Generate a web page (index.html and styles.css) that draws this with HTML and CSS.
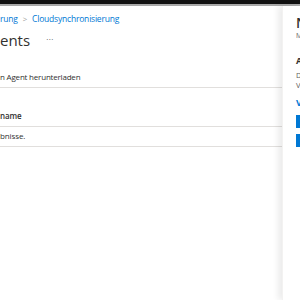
FILE: index.html
```html
<!DOCTYPE html>
<html lang="de">
<head>
  <meta charset="UTF-8">
  <title>Agents</title>
  <link rel="stylesheet" href="styles.css">
</head>
<body>
  <div class="topbar"></div>
  <div class="layout">
    <div class="main">
      <div class="breadcrumb">
        <a href="#">rung</a>
        <span class="sep">&gt;</span>
        <a href="#">Cloudsynchronisierung</a>
      </div>
      <div class="title-row">
        <h1>ents</h1>
        <span class="more">...</span>
      </div>
      <div class="toolbar">n Agent herunterladen</div>
      <div class="table">
        <div class="row head">name</div>
        <div class="row">bnisse.</div>
      </div>
    </div>
    <div class="panel">
      <div class="panel-title">N</div>
      <div class="panel-sub">M</div>
      <div class="panel-heading">A</div>
      <div class="panel-text">D</div>
      <div class="panel-text">V</div>
      <div class="panel-link">V</div>
      <div class="panel-btn"></div>
      <div class="panel-btn"></div>
    </div>
  </div>
</body>
</html>
```

FILE: styles.css
```css
html, body {
  margin: 0;
  padding: 0;
  height: 100%;
  background: #ffffff;
  font-family: "Open Sans", "Noto Sans", sans-serif;
  color: #323130;
  overflow: hidden;
}

.topbar {
  height: 4px;
  background: #111111;
  border-bottom: 2px solid #a8a8a8;
}

.layout {
  display: flex;
  height: calc(100% - 6px);
}

/* Hauptbereich */
.main {
  flex: 1;
  overflow: hidden;
}

.breadcrumb {
  display: flex;
  align-items: center;
  gap: 5px;
  margin-top: 7px;
  font-size: 8.5px;
  letter-spacing: -0.2px;
  line-height: 12px;
}

.breadcrumb a {
  color: #0078d4;
  text-decoration: none;
}

.sep {
  color: #a19f9d;
  font-size: 8px;
}

.title-row {
  display: flex;
  align-items: center;
  gap: 16px;
  margin-top: 4px;
  height: 22px;
}

h1 {
  margin: 0;
  font-size: 15px;
  font-weight: 400;
  line-height: 22px;
}

.more {
  font-size: 8px;
  color: #605e5c;
  letter-spacing: 0.5px;
  line-height: 8px;
  margin-bottom: 6px;
}

.toolbar {
  margin-top: 20px;
  font-size: 8px;
  letter-spacing: -0.2px;
  line-height: 12px;
  padding-bottom: 4px;
  border-bottom: 1px solid #e1dfdd;
}

.table {
  margin-top: 19px;
}

.row {
  font-size: 8px;
  letter-spacing: -0.1px;
  line-height: 12px;
  padding: 3px 0 4px;
  border-bottom: 1px solid #e1dfdd;
}

.row.head {
  font-weight: 600;
}

/* Seitenbereich rechts */
.panel {
  width: 4px;
  flex: none;
  padding-left: 13px;
  overflow: hidden;
  background: #ffffff;
  box-shadow: -4px 0 6px rgba(0, 0, 0, 0.08);
  border-left: 1px solid #f3f2f1;
}

.panel-title {
  margin-top: 9px;
  font-size: 14px;
  font-weight: 600;
  line-height: 16px;
}

.panel-sub {
  font-size: 7px;
  color: #605e5c;
  line-height: 10px;
}

.panel-heading {
  margin-top: 14px;
  font-size: 9px;
  font-weight: 700;
  line-height: 12px;
}

.panel-text {
  font-size: 7.5px;
  line-height: 10px;
  color: #605e5c;
}

.panel-heading + .panel-text {
  margin-top: 3px;
}

.panel-link {
  margin-top: 7px;
  font-size: 9px;
  font-weight: 700;
  color: #0078d4;
  line-height: 12px;
}

.panel-btn {
  height: 13px;
  margin-top: 6px;
  background: #0078d4;
}
```
